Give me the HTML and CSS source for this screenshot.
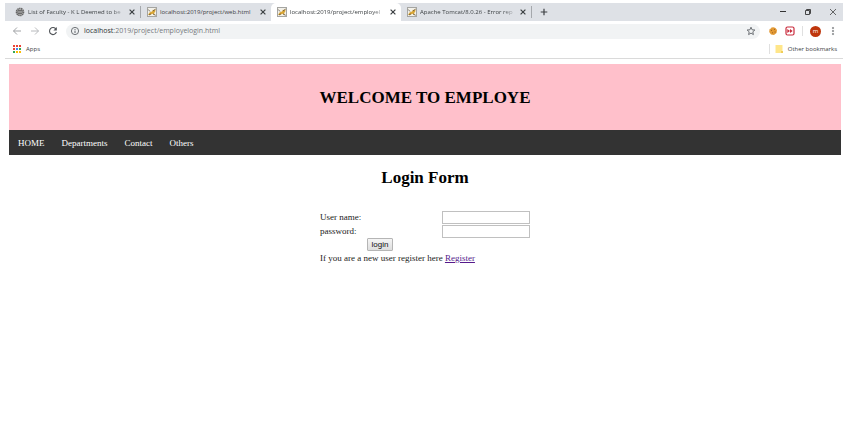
FILE: index.html
```
<!DOCTYPE html>
<html lang="en">
<head>
<meta charset="utf-8">
<title>Employe Login</title>
<link rel="stylesheet" href="styles.css">
</head>
<body>
<svg class="defs" aria-hidden="true">
  <symbol id="tomcat" viewBox="0 0 10 10">
    <rect x=".5" y=".5" width="9" height="9" fill="#f3f1ea" stroke="#a5a5a2"/>
    <path d="M1 8 2.5 5.5 5 4.5 6 2.5 7 3.2 8.6 2 8.2 5 7 6 8 8 5.5 6.8 3 8Z" fill="#d9a637"/>
    <path d="M1.3 2.5 3 4.5M2 8 4 6.8M6 7 8.7 8.3M6 4 8.6 2" stroke="#5d5240" stroke-width=".8" fill="none"/>
  </symbol>
  <symbol id="close" viewBox="0 0 6 6"><path d="M1.2 1.2 4.8 4.8M4.8 1.2 1.2 4.8" stroke="#3c4043" stroke-width=".9"/></symbol>
</svg>
<header class="browser">
  <div class="tabs">
    <div class="tab first">
      <svg class="favicon" viewBox="0 0 10 10"><circle cx="5" cy="5" r="3.5" fill="#bbb" stroke="#666" stroke-width="1.6" stroke-dasharray="1.4 .5"/><path d="M2 5H8M3 3.5H7M3 6.5H7" stroke="#555" stroke-width=".8"/></svg>
      <span class="title">List of Faculty - K L Deemed to be</span>
      <button class="close" aria-label="Close tab"><svg viewBox="0 0 6 6"><use href="#close"/></svg></button>
    </div>
    <div class="tab">
      <svg class="favicon"><use href="#tomcat"/></svg>
      <span class="title whole">localhost:2019/project/web.html</span>
      <button class="close" aria-label="Close tab"><svg viewBox="0 0 6 6"><use href="#close"/></svg></button>
    </div>
    <div class="tab active">
      <svg class="favicon"><use href="#tomcat"/></svg>
      <span class="title">localhost:2019/project/employel</span>
      <button class="close" aria-label="Close tab"><svg viewBox="0 0 6 6"><use href="#close"/></svg></button>
    </div>
    <div class="tab last">
      <svg class="favicon"><use href="#tomcat"/></svg>
      <span class="title">Apache Tomcat/8.0.26 - Error rep</span>
      <button class="close" aria-label="Close tab"><svg viewBox="0 0 6 6"><use href="#close"/></svg></button>
    </div>
    <button class="new-tab" aria-label="New tab"><svg viewBox="0 0 8 8"><path d="M4 .7V7.3M.7 4H7.3" stroke="#3c4043" stroke-width="1.2"/></svg></button>
    <div class="window-controls">
      <button aria-label="Minimize"><svg viewBox="0 0 8 8"><path d="M1 3.5H7" stroke="#333"/></svg></button>
      <button aria-label="Restore"><svg viewBox="0 0 8 8"><path d="M1.5 2.5H5.5V6.5H1.5ZM2.5 2V1.5H6.5V5.5H6" fill="none" stroke="#333" stroke-width=".9"/></svg></button>
      <button aria-label="Close"><svg viewBox="0 0 8 8"><path d="M1 1 7 7M7 1 1 7" stroke="#444" stroke-width=".8"/></svg></button>
    </div>
  </div>
  <div class="toolbar">
    <button aria-label="Back"><svg viewBox="0 0 10 10"><path d="M9 5H1.5M5 1.5 1.5 5 5 8.5" fill="none" stroke="#96999c" stroke-width=".9"/></svg></button>
    <button aria-label="Forward"><svg viewBox="0 0 10 10"><path d="M1 5H8.5M5 1.5 8.5 5 5 8.5" fill="none" stroke="#b0b2b5" stroke-width=".9"/></svg></button>
    <button aria-label="Reload"><svg viewBox="0 0 10 10"><path d="M8 3.2A3.5 3.5 0 1 0 8.4 6" fill="none" stroke="#505458" stroke-width="1.1"/><path d="M8.8 1V4.4H5.4Z" fill="#505458"/></svg></button>
    <div class="address">
      <svg viewBox="0 0 10 10"><circle cx="5" cy="5" r="3.6" fill="none" stroke="#5f6368" stroke-width=".9"/><path d="M5 4.6V7M5 3V3.9" stroke="#5f6368"/></svg>
      <span class="url"><b>localhost</b>:2019/project/employelogin.html</span>
      <button aria-label="Bookmark this page"><svg viewBox="0 0 10 10"><path d="M5 1.2 6.1 3.8 8.9 4 6.8 5.8 7.4 8.6 5 7.1 2.6 8.6 3.2 5.8 1.1 4 3.9 3.8Z" fill="none" stroke="#5f6368" stroke-width=".9"/></svg></button>
    </div>
    <div class="extensions">
      <button aria-label="Cookies"><svg viewBox="0 0 10 10"><path d="M1.6 3 3 2.6 3.4 1.5 5.5 1.2 7.5 2 9 4 8.5 7 6 9 3 8.5 1.2 6Z" fill="#e39a35"/><path d="M3 4.4H4M6 3.4H7M4 6.8H5M6.6 6H7.6" stroke="#8f5118" stroke-width=".8"/></svg></button>
      <button aria-label="Media control"><svg viewBox="0 0 10 10"><rect x="1" y="1" width="8" height="8" rx="1.5" fill="#fff" stroke="#c92b3c" stroke-width="1.2"/><path d="M2.3 3 5 5V3L7.7 5 5 7V5L2.3 7Z" fill="#c92b3c"/></svg></button>
      <span class="divider"></span>
      <button class="avatar" aria-label="Profile">m</button>
      <button aria-label="Menu"><svg viewBox="0 0 10 10"><path d="M4.4 1.4H5.6V2.6H4.4ZM4.4 4.4H5.6V5.6H4.4ZM4.4 7.4H5.6V8.6H4.4Z" fill="#4a4d51" stroke="#4a4d51" stroke-width=".3"/></svg></button>
    </div>
  </div>
  <div class="bookmarks">
    <a href="#apps"><svg viewBox="0 0 8 8"><path d="M0 0H2V2H0ZM3 0H5V2H3ZM6 0H8V2H6ZM0 3H2V5H0Z" fill="#ea4335"/><path d="M0 6H2V8H0ZM6 3H8V5H6Z" fill="#34a853"/><path d="M3 3H5V5H3Z" fill="#4285f4"/><path d="M3 6H5V8H3ZM6 6H8V8H6Z" fill="#fbbc05"/></svg>Apps</a>
    <a class="other" href="#bookmarks"><svg viewBox="0 0 8 8"><path d="M.5 0H7.5V8H.5Z" fill="#ffe68a"/><path d="M6 8V6H8V8Z" fill="#f0cd59"/></svg>Other bookmarks</a>
  </div>
</header>
<main>
  <div class="banner"><h1>WELCOME TO EMPLOYE</h1></div>
  <nav>
    <a href="#home">HOME</a>
    <a href="#departments">Departments</a>
    <a href="#contact">Contact</a>
    <a href="#others">Others</a>
  </nav>
  <h1 class="form-title">Login Form</h1>
  <form>
    <label for="user">User name:</label><input id="user" type="text">
    <label for="pass">password:</label><input id="pass" type="password">
    <button class="login" type="button">login</button>
    <p>If you are a new user register here <a href="#register">Register</a></p>
  </form>
</main>
</body>
</html>
```
FILE: styles.css
```
* { box-sizing: border-box; }
body {
  margin: 0;
  padding: 3px 0 0 5px;
  background: #fff;
  color: #222;
  font: 9px/14px "Liberation Serif", serif;
}
.defs { position: absolute; width: 0; height: 0; }
svg { display: block; flex: none; }
button { border: 0; padding: 0; background: none; font: inherit; }
.browser { font: 6px/10px "Open Sans", sans-serif; color: #3c4043; border-bottom: 1px solid #dadada; }
.browser button svg { width: 10px; height: 10px; }

.tabs { display: flex; align-items: stretch; height: 18px; background: #dee1e6; }
.tab { display: flex; align-items: center; width: 130px; padding: 0 4px 0 6px; }
.tab.first { width: 136px; padding-left: 10px; border-right: 1px solid #a5a8ac; }
.tab.active { background: #fff; border-radius: 5px 5px 0 0; }
.tab.first, .tab.last { height: 12px; margin-top: 3px; }
.tab.last { width: 131px; border-right: 1px solid #a5a8ac; }
.favicon { width: 10px; height: 10px; margin-right: 3px; }
.title {
  flex: 1;
  min-width: 0;
  overflow: hidden;
  white-space: nowrap;
  -webkit-mask-image: linear-gradient(to right, #000 85%, transparent);
  mask-image: linear-gradient(to right, #000 85%, transparent);
}
.title.whole { -webkit-mask-image: none; mask-image: none; }
.browser .close svg { width: 8px; height: 8px; margin-left: 2px; }
.new-tab { margin-left: 8px; }
.browser .new-tab svg { width: 8px; height: 8px; }
.window-controls { display: flex; align-items: center; gap: 17px; margin-left: auto; padding-right: 6px; }
.browser .window-controls svg { width: 8px; height: 8px; }

.toolbar { display: flex; align-items: center; gap: 8px; height: 20px; padding: 0 5px 0 7px; }
.address {
  display: flex;
  align-items: center;
  flex: 1;
  height: 15px;
  padding: 0 4px;
  border-radius: 8px;
  background: #f1f3f4;
  font-size: 7px;
}
.address > svg { width: 10px; height: 10px; margin-right: 4px; }
.url { flex: 1; color: #74787c; }
.url b { font-weight: 400; color: #303336; }
.extensions { display: flex; align-items: center; gap: 7px; }
.divider { width: 1px; height: 10px; background: #e0e0e0; }
.browser .avatar {
  width: 11px;
  height: 11px;
  border-radius: 50%;
  background: #bf360c;
  color: #fff;
  line-height: 10px;
}

.bookmarks { display: flex; justify-content: space-between; align-items: center; height: 17px; padding: 0 6px 2px 8px; }
.bookmarks a { display: flex; align-items: center; gap: 5px; color: inherit; text-decoration: none; }
.bookmarks svg { width: 8px; height: 8px; }
.other { padding-left: 5px; border-left: 1px solid #e0e0e0; }

main { padding: 5px 2px 0 4px; }
h1 { margin: 0; font-size: 17px; line-height: 20px; text-align: center; color: #000; }
.banner { padding: 24px 0 22px; background: #ffc0cb; }
nav { display: flex; gap: 17px; padding: 6px 9px 5px; background: #333; }
nav a { color: #fff; text-decoration: none; }
.form-title { margin: 13px 0 22px; }
form {
  display: grid;
  grid-template-columns: 120px 88px;
  column-gap: 2px;
  justify-content: center;
  align-items: center;
}
input { width: 88px; height: 13px; border: 1px solid #c0c0c0; padding: 1px; font: inherit; background: #fff; }
.login {
  grid-column: 1 / -1;
  justify-self: start;
  margin-left: 47px;
  width: 26px;
  height: 13px;
  border: 1px solid #b5b5b5;
  border-radius: 1px;
  background: linear-gradient(#f5f5f5, #dedede);
  color: #111;
  font: 8px/10px "Liberation Sans", sans-serif;
}
form p { grid-column: 1 / -1; margin: 0; }
form a { color: #551a8b; }
```
